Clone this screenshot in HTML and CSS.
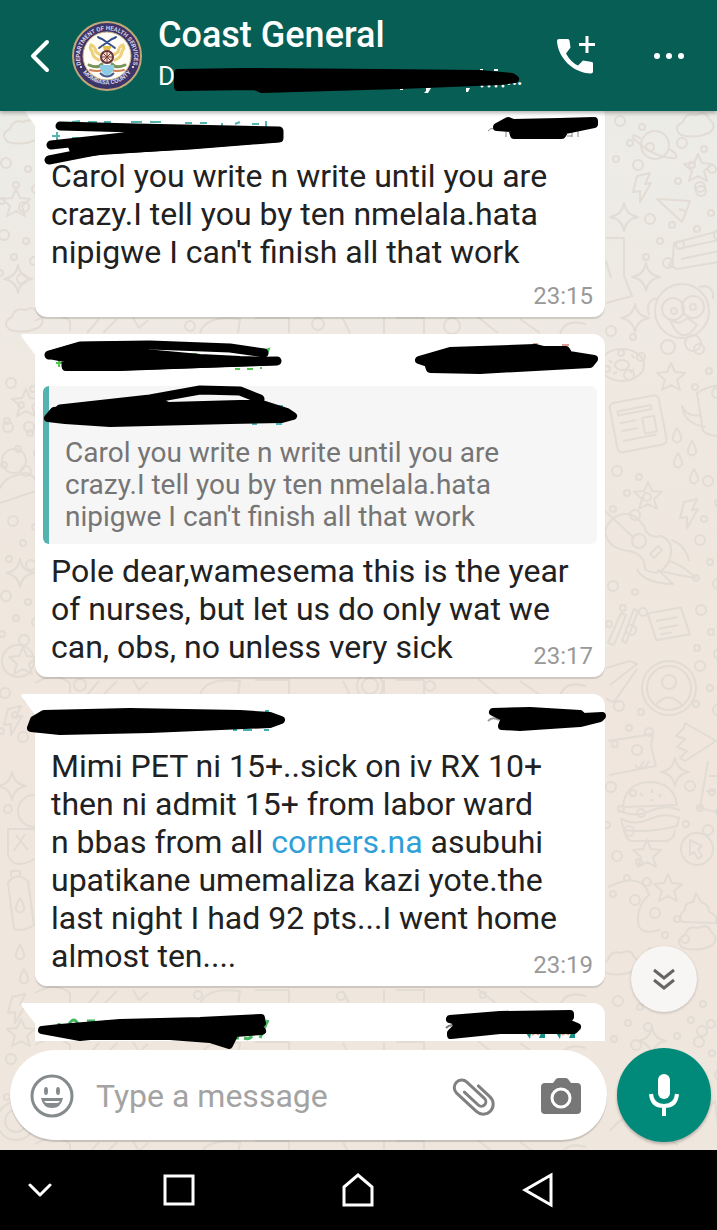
FILE: index.html
```html
<!DOCTYPE html>
<html lang="en">
<head>
<meta charset="utf-8">
<meta name="viewport" content="width=device-width, initial-scale=1">
<title>Coast General</title>
<link rel="stylesheet" href="styles.css">
</head>
<body>
<header class="topbar">
  <button class="icon-button" aria-label="Back"><svg width="22" height="36" viewBox="0 0 22 36"><path d="M18 4 4 18 18 32" fill="none" stroke="#fff" stroke-width="4" stroke-linecap="round" stroke-linejoin="round"/></svg></button>
  <svg class="avatar" width="70" height="70" viewBox="0 0 70 70" role="img" aria-label="Group emblem">
    <defs><path id="arcTop" d="M9.5 45 A27 27 0 1 1 60.5 45"/><path id="arcBottom" d="M10 50 A30 30 0 0 0 60 50"/></defs>
    <circle cx="35" cy="35" r="34" fill="#3d3468" stroke="#c2a878" stroke-width="2"/>
    <circle cx="35" cy="35" r="24" fill="#fffdf6" stroke="#cbb68b" stroke-width="1"/>
    <text class="seal"><textPath href="#arcTop" startOffset="50%" text-anchor="middle">DEPARTMENT OF HEALTH SERVICES</textPath></text>
    <text class="seal"><textPath href="#arcBottom" startOffset="50%" text-anchor="middle">MOMBASA COUNTY</textPath></text>
    <circle cx="9" cy="46" r="1" fill="#fff"/><circle cx="61" cy="46" r="1" fill="#fff"/>
    <g fill="none" stroke-linecap="round">
      <path d="M27 27 40 18q3-1 4-2M43 27 30 18q-3-1-4-2" stroke="#35508e" stroke-width="2"/>
      <path d="M27 39q-7-3-7-9-3-3-1-6 4 1 5 7l6 4M43 39q7-3 7-9 3-3 1-6-4 1-5 7l-6 4" stroke="#ecd07a" stroke-width="3"/>
      <path d="M17 44q9 4 13-1M53 44q-9 4-13-1" stroke="#79935d" stroke-width="3"/>
      <path d="M18 49q8 2 12 0M52 49q-8 2-12 0" stroke="#cf8055" stroke-width="2"/>
    </g>
    <path d="M28 44h14v3q-2 6-7 8-5-2-7-8z" fill="#8ccbe4"/>
    <path d="M30 25h10l-5 9z" fill="#e4bf50"/>
    <circle cx="35" cy="36" r="6" fill="#f3dfc7" stroke="#663341" stroke-width="2"/>
    <path d="M35 30v12M29 36h12M31 32l8 8M39 32l-8 8" stroke="#7a3b40"/>
    <path d="M28 52q7 7 14 0" fill="none" stroke="#4a5a8e" stroke-width="2"/>
  </svg>
  <div class="chat-info">
    <h1>Coast General</h1>
    <p class="members"><span>D</span><span class="members-rest">…</span>
      <svg class="ink members-ink" width="360" height="30" viewBox="170 66 360 30" aria-hidden="true">
        <g fill="#fff"><path d="M400 89h3v1h-3zM426 88h5l-3 5h-4l2-2zM466 88h4l-2 4h-2zM480 69h3v2h-3zM494 69h4v2h-4z"/><circle cx="482" cy="86" r="1.500"/><circle cx="489" cy="86" r="1.500"/><circle cx="496" cy="86" r="1.500"/><circle cx="503" cy="86" r="1.500"/></g>
        <path class="blot" d="M178 73 245 72 380 73 480 74 512 77 515 79 500 81 400 85 262 89 255 86 178 87z"/>
      </svg>
    </p>
  </div>
  <button class="icon-button" aria-label="Add call"><svg width="40" height="40" viewBox="0 0 40 40" fill="#fff"><path d="M2 3h9q1 0 1.500 1.500l1 7-4.500 6q5 9 12 12l5-5 9 1.500q1 0 1 1.500v8q0 2-2 2C16 37 1 22 0 5q0-2 2-2z"/><path d="M22 8.500h16M30 0v17" stroke="#fff" stroke-width="3"/></svg></button>
  <button class="icon-button more" aria-label="More options"><svg width="32" height="8" viewBox="0 0 32 8" fill="#fff"><circle cx="4" cy="4" r="3"/><circle cx="16" cy="4" r="3"/><circle cx="28" cy="4" r="3"/></svg></button>
</header>

<main class="chat">
  <svg class="wallpaper" viewBox="0 0 717 1040" preserveAspectRatio="xMaxYMin slice" aria-hidden="true">
    <defs>
      <path id="star" d="M0-14 4-5 14-4 6 3 9 13 0 8-9 13-6 3-14-4-4-5z"/>
      <path id="spark" d="M0-14Q2-2 14 0 2 2 0 14-2 2-14 0-2-2 0-14z"/>
      <path id="bolt" d="M-5-12 8-15 3-4 9-5-2 14-2 3-9 4z"/>
      <path id="drop" d="M0-8Q5 0 4 4 0 9-4 4-5 0 0-8z"/>
      <path id="cloud" d="M-14 9q-9-8 2-13 3-10 13-7 10-5 13 4 9 7 0 14-14 6-28 2z"/>
      <g id="dots"><circle cx="0" cy="0" r="5"/><circle cx="22" cy="6" r="3"/><circle cx="10" cy="22" r="3"/><circle cx="30" cy="26" r="4"/><circle cx="-4" cy="38" r="3"/><circle cx="18" cy="44" r="5"/></g>
      <g id="planet"><circle r="14"/><path d="M-14-6q-10-7-8-1Q0 14 20 13q5-3-6-9"/></g>
      <g id="doc"><rect x="-24" y="-24" width="50" height="50" rx="5"/><path d="M-17-15h34v4h-34zM-17-3H0M-17 5H0M-17 15h34M6-4h12v16H6z"/></g>
      <g id="sheet"><path d="M-18-16h34l4 28h-34zM-11-7h22M-10 1h20M-9 7h12"/></g>
      <g id="burger"><path d="M-27-6q2-24 27-25 24 1 27 23zM-30-2q15 7 30 0t30-1M-29 6q14 7 29 0t29-1l-2 8q-26 7-53 4zM-25 17q1 12 8 11h33q8-1 9-11"/><path d="M-10-20l3 3M2-24v4M11-19l-2 3M0-13h3"/></g>
      <g id="monkey"><circle r="27"/><circle cx="-9" cy="-2" r="11"/><circle cx="11" cy="-4" r="11"/><circle cx="-8" r="3"/><circle cx="11" cy="-4" r="3"/><path d="M-25-13q-12 3-8 17M17-24q15-4 14 12M-12 9q12 28 27 5l-9-7-9 5z"/><circle cx="-14" cy="36" r="7"/><circle cx="11" cy="32" r="8"/></g>
      <g id="donut"><ellipse rx="22" ry="16"/><ellipse rx="7" ry="5"/><path d="M-13-5l3 3M9-10l4 3M12 4l-4 4M-9 9l4-2"/></g>
      <g id="guitar"><path d="M-27-25q17-9 29 9 3 13 17 10 15 6 8 25-9 18-24 8 0-15-16-18-21-2-24-19 1-8 10-15zM-37-31-8-4"/><circle cx="-3" cy="-1" r="7"/><path d="M8 12 16 4l4 4-8 8z"/></g>
    </defs>
    <g class="doodles">
      <use href="#cloud" x="22" y="22"/><use href="#dots" x="6" y="52"/><use href="#star" x="16" y="92"/><use href="#dots" x="4" y="124"/><use href="#spark" x="18" y="168"/><use href="#cloud" x="24" y="210"/>
      <use href="#dots" x="11" y="272"/><use href="#star" x="26" y="292"/><use href="#dots" x="8" y="316"/><circle cx="14" cy="350" r="12"/><path d="M-4 392Q-2 367 18 364q14-6 20 10M0 392l36-12"/>
      <use href="#dots" x="13" y="410"/><use href="#spark" x="20" y="462"/><use href="#dots" x="6" y="485"/><use href="#star" x="23" y="550"/><circle cx="18" cy="550" r="16"/><use href="#dots" x="5" y="582"/><use href="#bolt" x="13" y="610"/><use href="#spark" x="12" y="675"/><circle cx="8" cy="698" r="4"/><circle cx="34" cy="700" r="16"/>
      <path d="M8 718h30v28q-24 15-30-2zM16 724l12 15M25 723 14 740M8 772q8-12 20-2l6 44q-10 7-20 4zM11 766v-6h9v6"/><use href="#drop" x="20" y="795"/><use href="#drop" x="20" y="842"/><use href="#drop" x="24" y="866"/><use href="#bolt" x="17" y="898"/><use href="#star" x="21" y="922"/><use href="#dots" x="11" y="948"/><circle cx="16" cy="1010" r="19"/><circle cx="16" cy="1010" r="11"/>
      <use href="#dots" x="620" y="10"/><use href="#planet" x="655" y="34"/><use href="#cloud" x="695" y="15"/><use href="#dots" x="682" y="32"/><use href="#star" x="698" y="57"/><use href="#bolt" x="642" y="77"/><use href="#spark" x="624" y="106"/><path d="M657 88l33 2-8 21zM679 98l6 2"/><use href="#dots" x="650" y="108"/><use href="#dots" x="701" y="80"/>
      <path d="M674 132l45-12v31l-42 7-8-4 4-6zM678 138l40-9M681 148l38-8M606 127h18v38l8 20-26 7M606 150l5 17"/><use href="#spark" x="646" y="166"/><use href="#spark" x="635" y="207"/><use href="#monkey" x="682" y="200"/><use href="#dots" x="611" y="220"/><use href="#dots" x="699" y="238"/>
      <use href="#donut" x="622" y="254"/><use href="#star" x="671" y="266"/><use href="#doc" transform="translate(637 312) rotate(-11)"/><path d="M697 282q10-7 24-8v52q-14-2-18-6zM701 304q-14 3-19-9 2 18 24 21"/><use href="#drop" x="677" y="325"/><use href="#drop" x="692" y="338"/><use href="#drop" x="678" y="350"/><use href="#drop" x="694" y="366"/><use href="#dots" x="617" y="360"/><use href="#star" x="648" y="385"/><use href="#bolt" x="689" y="403"/><use href="#dots" x="708" y="370"/><use href="#guitar" x="642" y="431"/><path d="M671 429q14 4 18 21M669 450q12 3 27 17-26-4-38-8l15 14q-30-1-36-15"/><use href="#dots" x="700" y="429"/><use href="#dots" x="613" y="475"/>
      <path d="M608 532l13-30 5 2-12 30zM622 530l12-32 4 2-12 32z"/><use href="#sheet" transform="translate(668 515) rotate(-10)"/><use href="#dots" x="701" y="499"/><path d="M606 557l24-7 7 3-27 21M606 588l8 3 23-33"/><circle cx="669" cy="577" r="27"/><circle cx="669" cy="577" r="22"/><circle cx="669" cy="571" r="7"/><path d="M655 595q13-17 28 0"/><use href="#dots" x="619" y="595"/><use href="#dots" x="700" y="555"/>
      <path d="M608 630l45-7-2 12 5 20-47 9M635 654l4 4 5-8M640 654l4 4 5-8M685 612l31 18-31 20-5-3 7-7-10-4 8-8-9-3 8-8z"/><use href="#spark" x="675" y="661"/><use href="#burger" x="650" y="702"/><path d="M708 650l-8 47 20 5M709 665h9M706 680h10"/><use href="#dots" x="611" y="676"/><use href="#dots" x="690" y="675"/><circle cx="697" cy="738" r="16"/><path d="M690 729l12 6-4 3 4 7-4 3-4-7-4 3z"/><use href="#star" x="647" y="743"/><use href="#star" x="668" y="777"/><use href="#dots" x="617" y="745"/><path d="M608 776q35-16 41 8-12 10-11 27 1 14 22 8M682 811q-4-7 3-12-1-7 8-8l3-9 5 9q8 2 8 10 9 3 7 11z"/><use href="#dots" x="655" y="802"/><use href="#cloud" x="697" y="828"/><use href="#cloud" x="620" y="853"/><use href="#dots" x="618" y="890"/><use href="#dots" x="681" y="887"/><use href="#spark" x="652" y="930"/><use href="#dots" x="702" y="920"/><path d="M610 1020q20-26 38-5l30 19M695 1010l20-20 5 40"/>
      <g><path id="gapLine" d="M35 210q20-12 35 0v10M87 222l12-14M103 222l14-14M133 207l6 10 9-8M200 222q5-18 40-14l-2 14M255 207h34v15M350 222l-7-14M384 207v16M396 207h28v16M478 206q12 10 20 16M520 208l20 14M560 223q5-16 26-10"/><circle cx="190" cy="215" r="5"/><circle cx="318" cy="213" r="6"/><circle cx="452" cy="215" r="8"/></g>
      <use href="#gapLine" y="362"/><use href="#gapLine" y="672"/><use href="#gapLine" y="724"/><use href="#gapLine" y="823"/>
      <circle cx="80" cy="574" r="6"/><circle cx="370" cy="575" r="8"/><circle cx="370" cy="575" r="13"/><circle cx="430" cy="575" r="5"/><circle cx="198" cy="884" r="4"/><circle cx="341" cy="885" r="4"/><circle cx="483" cy="884" r="3"/>
    </g>
  </svg>

  <section class="messages" aria-label="Messages">
    <article class="message message-first">
      <svg class="ink ink-left" width="270" height="60" viewBox="35 107 270 60" aria-hidden="true">
        <path d="M72 122l8-1M88 122h9M104 122h7M131 122h11M150 122h11M185 123h7M200 123h7M222 123v3M235 124l5-2M252 124h7M266 121v6M57 132v8M52 136h8M72 138h7" fill="none" stroke="#54b4ae" stroke-width="2"/>
        <path class="stroke" d="M60 126 135 128 279 131V138L190 145 100 150 49 160M51 145 150 134 279 133"/>
        <path class="blot" d="M72 146 130 136 150 133 279 132V138L190 145 100 151 75 154z"/>
      </svg>
      <svg class="ink ink-right" width="130" height="36" viewBox="480 107 130 36" aria-hidden="true">
        <path d="M488 131q3-4 6-2M506 130v7M572 130v7M578 128v9M567 136h5" fill="none" stroke="#888" stroke-width="1"/>
        <path class="blot" d="M497 127 508 121 513 123 560 122 594 121V124L565 130 562 135H514L512 128z"/>
      </svg>
      <p class="text">Carol you write n write until you are crazy.I tell you by ten nmelala.hata nipigwe I can't finish all that work</p>
      <time class="time">23:15</time>
    </article>

    <article class="message">
      <svg class="tail" width="15" height="22" viewBox="0 0 15 22" aria-hidden="true"><path d="M1 0h14v22L0 2z" fill="#fff"/></svg>
      <svg class="ink ink-left" width="270" height="42" viewBox="35 337 270 42" aria-hidden="true">
        <path d="M56 363h6M59 360v7M265 350l4-1-2 5M235 369h5M247 369h6M261 369v-2M190 354h7" fill="none" stroke="#50c850" stroke-width="2"/>
        <path class="stroke" d="M49 355 80 346 150 345 230 348 264 353M66 366 120 366 277 361"/><path class="blot" d="M49 355 80 346 145 345 145 353 200 358 240 360 277 361 200 364 120 367 66 367 65 358z"/>
      </svg>
      <svg class="ink ink-right" width="195" height="42" viewBox="415 337 195 42" aria-hidden="true">
        <path d="M562 345h7M533 344h5" stroke="#dd9f94" stroke-width="2"/>
        <path class="blot" d="M419 360 450 351 535 348 543 350 566 350 569 355 594 359 590 364 480 370 430 369 428 363z"/>
      </svg>
      <blockquote class="quote">
        <svg class="ink ink-quote" width="260" height="46" viewBox="43 384 260 46" aria-hidden="true">
          <path d="M278 406h5M252 424h5M276 424h6M266 405h3" stroke="#4bb8c4" stroke-width="2"/>
          <path class="stroke" d="M60 409 150 399 200 390 240 391 260 399 258 404"/><path class="blot" d="M48 418 54 411 120 404 160 402 168 406 240 404 262 404 287 412 293 416 282 419 230 420 110 423 65 420z"/>
        </svg>
        Carol you write n write until you are crazy.I tell you by ten nmelala.hata nipigwe I can't finish all that work
      </blockquote>
      <p class="text">Pole dear,wamesema this is the year of nurses, but let us do only wat we can, obs, no unless very sick</p>
      <time class="time">23:17</time>
    </article>

    <article class="message">
      <svg class="tail" width="15" height="22" viewBox="0 0 15 22" aria-hidden="true"><path d="M1 0h14v22L0 2z" fill="#fff"/></svg>
      <svg class="ink ink-far-left" width="270" height="45" viewBox="25 697 270 45" aria-hidden="true">
        <path d="M233 730h4M243 730h9M264 730h5M265 711h4" stroke="#3eb2b2" stroke-width="2"/>
        <path class="blot" d="M31 728 34 720 44 714 130 712 240 714 270 716 281 720 270 724 150 729 60 731z"/>
      </svg>
      <svg class="ink ink-right" width="125" height="40" viewBox="485 697 125 40" aria-hidden="true">
        <path d="M488 721q5-5 11-1M560 725h19" fill="none" stroke="#999" stroke-width="2"/>
        <path class="blot" d="M493 712 530 711 580 714 583 717 602 716 600 718 580 723 520 727 502 726 505 718z"/>
      </svg>
      <p class="text">Mimi PET ni 15+..sick on iv RX 10+ then ni admit 15+ from labor ward<br>n bbas from all <a href="#corners">corners.na</a> asubuhi upatikane umemaliza kazi yote.the last night I had 92 pts...I went home almost ten....</p>
      <time class="time">23:19</time>
    </article>

    <article class="message">
      <svg class="tail" width="15" height="22" viewBox="0 0 15 22" aria-hidden="true"><path d="M1 0h14v22L0 2z" fill="#fff"/></svg>
    </article>
  </section>

  <button class="jump" aria-label="Scroll to latest"><svg width="26" height="24" viewBox="0 0 26 24"><path d="M3 3 13 11 23 3M3 13 13 21 23 13" fill="none" stroke="#666" stroke-width="3"/></svg></button>

  <form class="composer">
    <svg class="ink ink-composer-left" width="250" height="46" viewBox="30 1007 250 46" aria-hidden="true">
      <path d="M59 1023v4M69 1024q5-8 9 0M87 1021h8M106 1023v-3M67 1037h12M236 1038h3M244 1038q5 2 8-2M268 1020 260 1038" fill="none" stroke="#45b763" stroke-width="3"/>
      <path class="blot" d="M42 1030 60 1028 120 1023 200 1021 261 1018 262 1023 258 1026 262 1031 235 1033 229 1045 210 1039 170 1036 90 1036 80 1037z"/>
    </svg>
    <svg class="ink ink-composer-right" width="150" height="38" viewBox="440 1007 150 38" aria-hidden="true">
      <path d="M446 1028q4-4 9-2M490 1033h24" fill="none" stroke="#777" stroke-width="2"/>
      <path d="M526 1033h5l-1 6zM539 1038l2-5h4v5zM556 1033h5l-1 6zM569 1038l2-5h4v5z" fill="#168f89"/><path d="M532 1035q4-4 7 0M562 1035q4-4 7 0" fill="none" stroke="#dd9a77" stroke-width="2"/>
      <path class="blot" d="M450 1019 500 1015 570 1014 570 1017 565 1022 577 1027 574 1030 500 1030 451 1035 451 1033 458 1026 454 1020z"/>
    </svg>
    <div class="field">
      <button type="button" class="icon-button" aria-label="Emoji"><svg width="44" height="44" viewBox="0 0 44 44"><circle cx="22" cy="22" r="20" fill="none" stroke="#858a8d" stroke-width="3"/><ellipse cx="16" cy="17" rx="2" ry="4" fill="#858a8d"/><ellipse cx="28" cy="17" rx="2" ry="4" fill="#858a8d"/><path d="M11 24h22q-2 10-11 10t-11-10z" fill="#858a8d"/><path d="M14 27h16l-2 2H16z" fill="#fff"/></svg></button>
      <input class="entry" type="text" placeholder="Type a message" aria-label="Type a message">
      <button type="button" class="icon-button" aria-label="Attach"><svg class="clip" width="44" height="40" viewBox="0 0 44 40"><path transform="translate(22 20) rotate(43)" d="M-3-11H13A10 10 0 0 1 13 9H-14A7.500 7.500 0 0 1-14-6H10A4.500 4.500 0 0 1 10 3H-9" fill="none" stroke="#808080" stroke-width="3" stroke-linecap="round"/></svg></button>
      <button type="button" class="icon-button camera" aria-label="Camera"><svg width="42" height="38" viewBox="0 0 42 38"><path d="M5 6h8l3-4q1-1 3-1h6q2 0 3 1l3 4h6q4 0 4 4v23q0 4-4 4H5q-4 0-4-4V10q0-4 4-4z" fill="#777"/><circle cx="21" cy="21" r="9" fill="none" stroke="#fff" stroke-width="3"/></svg></button>
    </div>
    <button type="button" class="mic" aria-label="Record voice message"><svg width="30" height="42" viewBox="0 0 30 42"><rect x="9" y="0" width="12" height="25" rx="6" fill="#fff"/><path d="M2 20q1 12 13 12t13-12M15 32v10" fill="none" stroke="#fff" stroke-width="4"/></svg></button>
  </form>
</main>

<nav class="system-nav" aria-label="System">
  <button class="icon-button" aria-label="Hide"><svg width="24" height="14" viewBox="0 0 24 14"><path d="M2 2 12 12 22 2" fill="none" stroke="#fff" stroke-width="3" stroke-linecap="round" stroke-linejoin="round"/></svg></button>
  <button class="icon-button" aria-label="Recent apps"><svg width="32" height="32" viewBox="0 0 32 32"><rect x="2" y="2" width="28" height="28" fill="none" stroke="#fff" stroke-width="3"/></svg></button>
  <button class="icon-button" aria-label="Home"><svg width="32" height="34" viewBox="0 0 32 34"><path d="M2 32V14L16 2 30 14V32z" fill="none" stroke="#fff" stroke-width="3"/></svg></button>
  <button class="icon-button" aria-label="Back"><svg width="32" height="36" viewBox="0 0 32 36"><path d="M29 3V33L3 18z" fill="none" stroke="#fff" stroke-width="3"/></svg></button>
</nav>
</body>
</html>
```

FILE: styles.css
```css
* { box-sizing: border-box; }

body {
  margin: 0;
  height: 100vh;
  display: flex;
  flex-direction: column;
  font-family: Roboto, "Liberation Sans", sans-serif;
  color: #212121;
}

h1, p, blockquote { margin: 0; }
svg { display: block; }
button { font: inherit; border: 0; padding: 0; cursor: pointer; }
.icon-button { background: none; flex: none; }

.ink { position: absolute; pointer-events: none; z-index: 2; }
.blot, .stroke { stroke: #000; stroke-width: 8px; stroke-linecap: round; stroke-linejoin: round; }
.blot { fill: #000; }
.stroke { fill: none; stroke-width: 9px; }

/* Title bar */
.topbar {
  position: relative;
  z-index: 3;
  flex: none;
  display: flex;
  align-items: center;
  min-height: 111px;
  padding: 0 32px 0 29px;
  background: #075e54;
  color: #fff;
  box-shadow: 0 2px 4px rgba(0, 0, 0, 0.3);
}
.avatar { flex: none; margin: 0 16px 0 21px; }
.seal { font-size: 6px; font-weight: 700; fill: #d8d4e6; }
.chat-info { flex: 1; min-width: 0; }
.chat-info h1 { font-size: 36px; line-height: 41px; font-weight: 500; white-space: nowrap; }
.members {
  position: relative;
  display: flex;
  width: 365px;
  justify-content: space-between;
  font-size: 26px;
  line-height: 40px;
}
.members-ink { left: 12px; top: 10px; }
.more { margin-left: 56px; }

/* Conversation */
.chat {
  position: relative;
  flex: 1;
  min-height: 0;
  display: flex;
  flex-direction: column;
  background: linear-gradient(#ecece7, #efe8e0 30%, #f0e6dd 60%, #efe6dd);
}
.wallpaper { position: absolute; inset: 0; width: 100%; height: 100%; }
.doodles { fill: none; stroke: #e2dcd4; stroke-width: 2px; stroke-linejoin: round; }
.messages {
  position: relative;
  flex: 1;
  min-height: 0;
  overflow: hidden;
  display: flex;
  flex-direction: column;
  gap: 17px;
  padding: 0 112px 0 35px;
}
.message {
  position: relative;
  flex: none;
  min-height: 64px;
  padding: 53px 16px 11px;
  background: #fff;
  border-radius: 0 12px 12px 12px;
  box-shadow: 0 2px 1px rgba(0, 0, 0, 0.14);
}
.message-first { margin-top: -7px; padding-bottom: 46px; }
.message-first::before {
  content: "";
  position: absolute;
  left: -15px;
  top: 0;
  width: 15px;
  height: 22px;
  background: #fff;
  clip-path: polygon(0 0, 100% 0, 100% 100%);
}
.tail { position: absolute; left: -14px; top: 0; }
.text { font-size: 32px; line-height: 38px; }
.text a { color: #2f9fd8; text-decoration: none; }
.time {
  position: absolute;
  right: 12px;
  bottom: 7px;
  font-size: 24px;
  line-height: 28px;
  color: #999;
}
.quote {
  position: relative;
  margin: 0 -8px 8px;
  padding: 51px 24px 11px 16px;
  border-left: 6px solid #54b3ae;
  border-radius: 6px;
  background: #f6f6f6;
  font-size: 28px;
  line-height: 32px;
  color: #757575;
}
.message:has(.quote) { padding-top: 52px; }
.ink-left { left: 0; top: 3px; }
.ink-far-left { left: -10px; top: 3px; }
.ink-right { right: -5px; top: 3px; }
.ink-quote { left: -6px; top: -2px; }

.jump {
  position: absolute;
  right: 20px;
  bottom: 138px;
  width: 66px;
  height: 66px;
  display: grid;
  place-items: center;
  border-radius: 50%;
  background: #f8f6f5;
  box-shadow: 0 1px 3px rgba(0, 0, 0, 0.2);
}

/* Composer */
.composer {
  position: relative;
  flex: none;
  display: flex;
  align-items: center;
  gap: 10px;
  padding: 7px 6px 8px 10px;
}
.ink-composer-left { left: 30px; top: -34px; }
.ink-composer-right { right: 127px; top: -34px; }
.field {
  flex: 1;
  min-width: 0;
  height: 90px;
  display: flex;
  align-items: center;
  padding: 2px 25px 0 20px;
  border-radius: 45px;
  background: #fff;
  box-shadow: 0 2px 1px rgba(0, 0, 0, 0.16);
}
.entry {
  flex: 1;
  min-width: 0;
  margin-left: 22px;
  padding: 0;
  border: 0;
  outline: 0;
  background: none;
  font: 32px/38px Roboto, "Liberation Sans", sans-serif;
  color: #212121;
}
.entry::placeholder { color: #a3a3a3; opacity: 1; }
.clip { overflow: visible; }
.camera { margin-left: 45px; }
.mic {
  flex: none;
  width: 94px;
  height: 94px;
  display: grid;
  place-items: center;
  border-radius: 50%;
  background: #018a7a;
  box-shadow: 0 2px 3px rgba(0, 0, 0, 0.25);
}

/* System buttons */
.system-nav {
  flex: none;
  height: 80px;
  display: grid;
  grid-template-columns: 4fr 10fr 8fr 10fr 4fr;
  align-items: center;
  justify-items: center;
  background: #000;
}
```
